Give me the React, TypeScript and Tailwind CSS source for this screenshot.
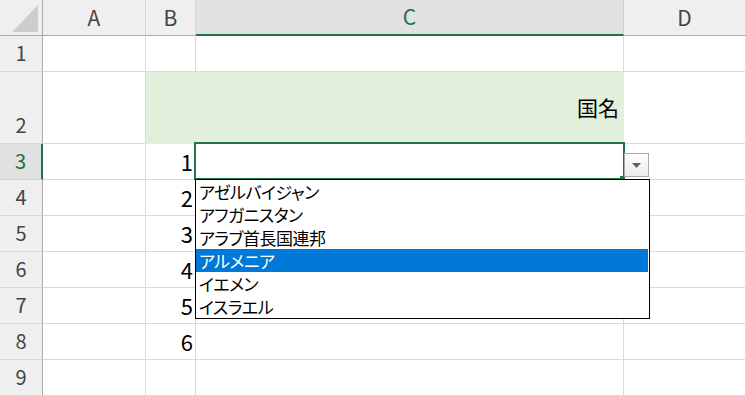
import React from "react";

const cols = [
  { key: "A", w: "w-[103px]" },
  { key: "B", w: "w-[50px]" },
  { key: "C", w: "w-[428px]" },
  { key: "D", w: "w-[122px]" },
];

const rowHeights = ["h-[36px]", "h-[72px]", "h-[36px]", "h-[36px]", "h-[36px]", "h-[36px]", "h-[36px]", "h-[36px]", "h-[36px]"];

const countries = ["アゼルバイジャン", "アフガニスタン", "アラブ首長国連邦", "アルメニア", "イエメン", "イスラエル"];

const font = "font-['Noto_Sans_CJK_JP','Noto_Sans',sans-serif]";

function Header() {
  return (
    <div className="flex h-[36px]">
      {/* corner */}
      <div className="relative w-[43px] shrink-0 border-r border-b border-[#ababab] bg-[#efefef]">
        <svg className="absolute left-[12px] top-[5px]" width="27" height="28" viewBox="0 0 27 28">
          <polygon points="0,27 26,27 26,0" fill="#cdcdcd" />
        </svg>
      </div>
      {cols.map((c) => {
        const sel = c.key === "C";
        return (
          <div
            key={c.key}
            className={`${c.w} shrink-0 flex items-center justify-center border-r text-[21px] ${
              sel
                ? "bg-[#e1e1e1] border-r-[#d0d0d0] border-b-2 border-b-[#217346] text-[#217346]"
                : "bg-[#efefef] border-r-[#d7d7d7] border-b border-b-[#ababab] text-[#444]"
            }`}
          >
            {c.key}
          </div>
        );
      })}
    </div>
  );
}

export default function App() {
  return (
    <div className={`relative w-[746px] h-[396px] overflow-hidden bg-white ${font}`}>
      <Header />
      {rowHeights.map((h, i) => {
        const r = i + 1;
        const selRow = r === 3;
        const bNum = r >= 3 && r <= 8 ? r - 2 : null;
        return (
          <div key={r} className={`flex ${h}`}>
            <div
              className={`w-[43px] shrink-0 flex items-end justify-center pb-[3px] border-b text-[20px] ${
                selRow
                  ? "bg-[#e1e1e1] border-r-2 border-r-[#217346] text-[#217346] border-b-[#d0d0d0]"
                  : "bg-[#efefef] border-r border-r-[#ababab] text-[#444] border-b-[#d7d7d7]"
              }`}
            >
              {r}
            </div>
            <div className="w-[103px] shrink-0 border-r border-b border-[#dadada]" />
            {r === 2 ? (
              <div className="w-[478px] shrink-0 flex items-center justify-end pr-[5px] bg-[#e2efda] text-[21px] text-black">
                国名
              </div>
            ) : (
              <>
                <div className="w-[50px] shrink-0 flex items-end justify-end pr-[2px] pb-[1px] border-r border-b border-[#dadada] text-[22px] text-black">
                  {bNum}
                </div>
                <div className="w-[428px] shrink-0 border-r border-b border-[#dadada]" />
              </>
            )}
            <div className="w-[122px] shrink-0 border-r border-b border-[#dadada]" />
          </div>
        );
      })}

      {/* active cell C3 */}
      <div className="absolute left-[194px] top-[142px] w-[431px] h-[38px] border-2 border-[#217346]" />
      <div className="absolute left-[620px] top-[176px] w-[5px] h-[4px] bg-[#217346]" />

      {/* dropdown button */}
      <div className="absolute left-[624px] top-[153px] w-[25px] h-[24px] flex items-center justify-center border border-[#a9a9a9] bg-gradient-to-b from-[#fdfdfd] to-[#ebebeb]">
        <svg width="9" height="5" viewBox="0 0 9 5">
          <polygon points="0,0 9,0 4.5,5" fill="#5f5f5f" />
        </svg>
      </div>

      {/* validation list */}
      <div className="absolute left-[195px] top-[179px] w-[455px] h-[140px] border border-black bg-white">
        {countries.map((c, i) => (
          <div
            key={c}
            className={`h-[23px] flex items-center pl-[3px] text-[17px] leading-none tracking-[-0.5px] [font-feature-settings:'palt'] ${
              i === 3 ? "bg-[#0078d7] text-white mr-[1px]" : "text-black"
            }`}
          >
            {c}
          </div>
        ))}
      </div>
    </div>
  );
}
